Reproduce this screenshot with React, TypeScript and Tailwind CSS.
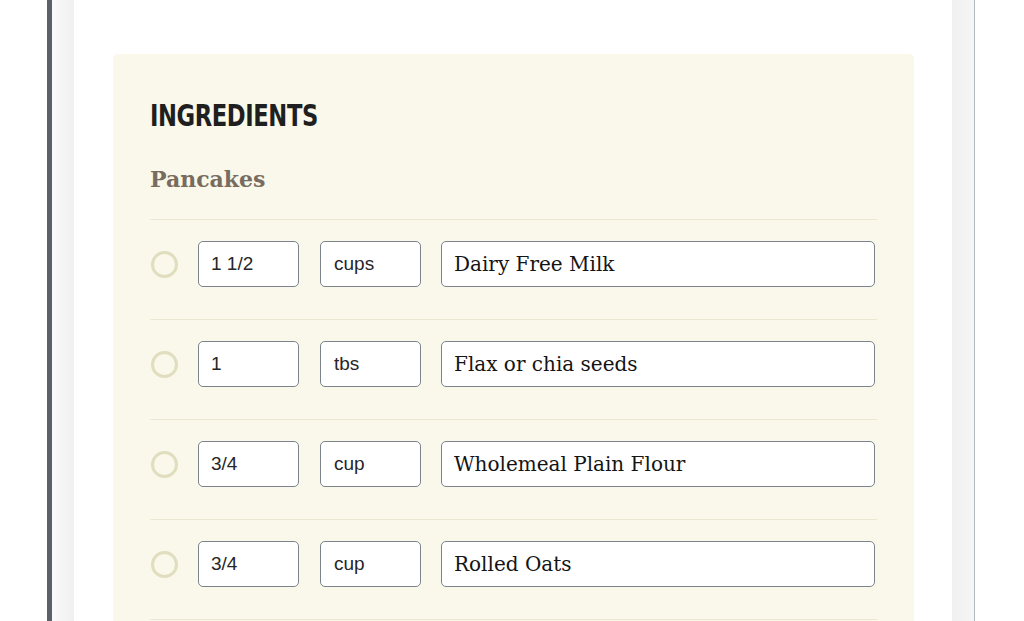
import React from "react";

const rows = [
  { qty: "1 1/2", unit: "cups", name: "Dairy Free Milk" },
  { qty: "1", unit: "tbs", name: "Flax or chia seeds" },
  { qty: "3/4", unit: "cup", name: "Wholemeal Plain Flour" },
  { qty: "3/4", unit: "cup", name: "Rolled Oats" },
];

export default function App() {
  return (
    <div className="flex h-[621px] w-[1024px] overflow-hidden bg-white">
      <div className="w-[47px] shrink-0 bg-white" />
      <div className="w-[5px] shrink-0 bg-[#5c6169]" />
      <div className="w-[22px] shrink-0 bg-gradient-to-r from-[#f9f9f9] to-[#f0f0f0]" />
      <main className="w-[878px] shrink-0 bg-white pl-[39px] pr-[38px] pt-[54px]">
        <section className="rounded-[5px] bg-[#f9f8ea] px-[37px] pt-[47px]">
          <h2
            className="text-[30px] font-bold uppercase leading-none text-[#1f1f1f]"
            style={{ fontFamily: '"DejaVu Sans", sans-serif', fontStretch: "condensed" }}
          >
            <span className="inline-block origin-left scale-x-[0.84] tracking-[-0.5px]">Ingredients</span>
          </h2>
          <h3
            className="mt-[37px] text-[22px] font-bold leading-none text-[#786c60]"
            style={{ fontFamily: '"DejaVu Serif", serif' }}
          >
            Pancakes
          </h3>
          <ul className="mt-[29px]">
            {rows.map((r, i) => (
              <li key={i} className="flex items-center border-t border-[#ebe7d2] pb-[32px] pt-[21px]">
                <span className="ml-px h-[27px] w-[27px] shrink-0 rounded-full border-[3px] border-[#e1ddbf]" />
                <div
                  className="ml-[20px] flex h-[46px] w-[101px] items-center rounded-[5px] border border-[#7c838c] bg-white px-[12px] text-[19px] text-[#262626]"
                  style={{ fontFamily: '"Liberation Sans", Arial, sans-serif' }}
                >
                  {r.qty}
                </div>
                <div
                  className="ml-[21px] flex h-[46px] w-[101px] items-center rounded-[5px] border border-[#7c838c] bg-white px-[13px] text-[19px] text-[#262626]"
                  style={{ fontFamily: '"Liberation Sans", Arial, sans-serif' }}
                >
                  {r.unit}
                </div>
                <div
                  className="ml-[20px] flex h-[46px] w-[434px] items-center rounded-[5px] border border-[#7c838c] bg-white px-[12px] text-[20px] text-[#141414]"
                  style={{ fontFamily: '"DejaVu Serif", serif' }}
                >
                  {r.name}
                </div>
              </li>
            ))}
            <li className="h-[20px] border-t border-[#ebe7d2]" />
          </ul>
        </section>
      </main>
      <div className="w-[22px] shrink-0 bg-gradient-to-r from-[#f0f0f0] to-[#f6f6f6]" />
      <div className="w-[1px] shrink-0 bg-[#b3b8bd]" />
      <div className="flex-1 bg-white" />
    </div>
  );
}
